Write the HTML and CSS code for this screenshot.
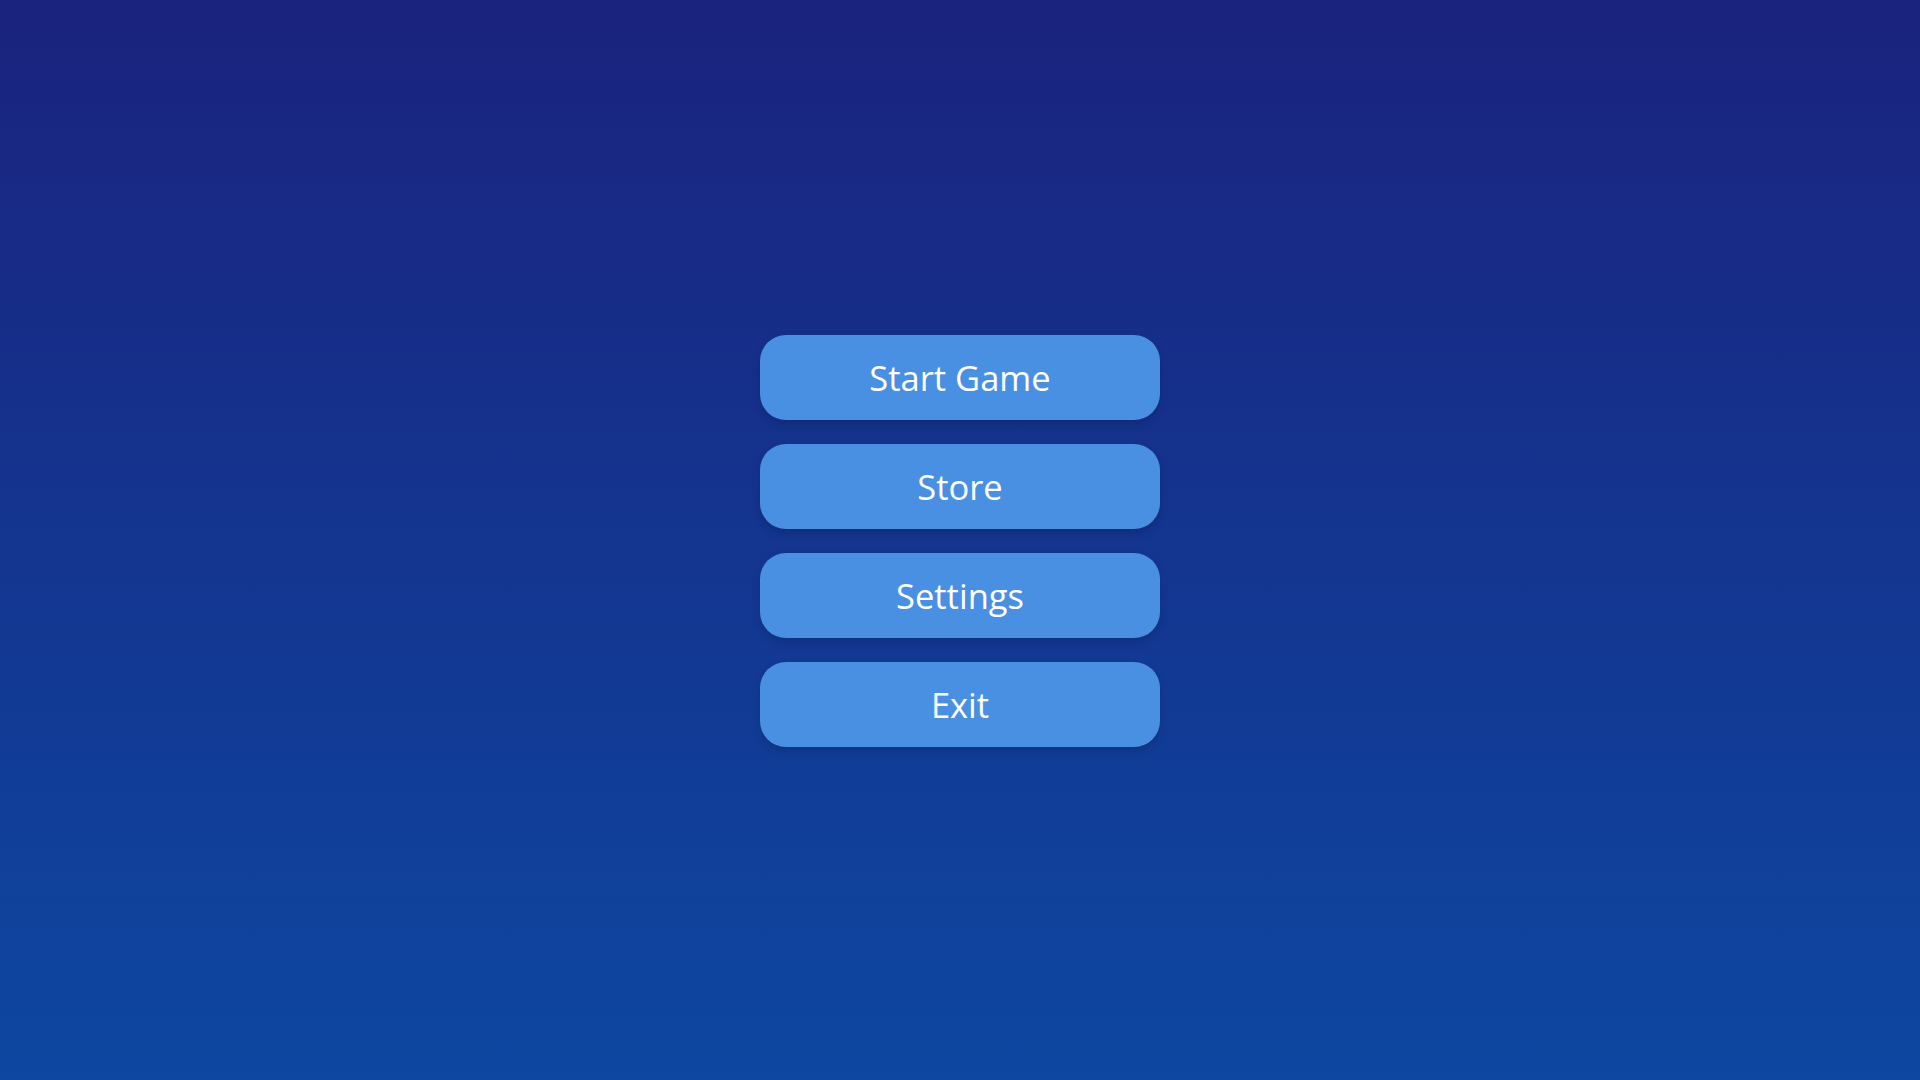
FILE: index.html
```html
<!DOCTYPE html>
<html lang="en">
<head>
<meta charset="utf-8">
<title>Main Menu</title>
<link rel="stylesheet" href="styles.css">
</head>
<body>
<main class="menu">
  <button class="menu-btn">Start Game</button>
  <button class="menu-btn">Store</button>
  <button class="menu-btn">Settings</button>
  <button class="menu-btn">Exit</button>
</main>
</body>
</html>
```

FILE: styles.css
```css
html, body {
  margin: 0;
  padding: 0;
  height: 100%;
}
body {
  background: linear-gradient(to bottom, #1a237e, #0d47a1);
  font-family: "Open Sans", "Noto Sans", sans-serif;
}
.menu {
  height: 100vh;
  display: flex;
  flex-direction: column;
  align-items: center;
  justify-content: center;
  gap: 24px;
  padding-top: 2px;
  box-sizing: border-box;
}
.menu-btn {
  width: 400px;
  height: 85px;
  border: none;
  border-radius: 26px;
  background: #4a90e2;
  color: #ffffff;
  font-family: inherit;
  font-size: 34.5px;
  font-weight: 400;
  box-shadow: 0 4px 8px rgba(0, 0, 0, 0.15);
  cursor: pointer;
  padding: 0;
}
```
